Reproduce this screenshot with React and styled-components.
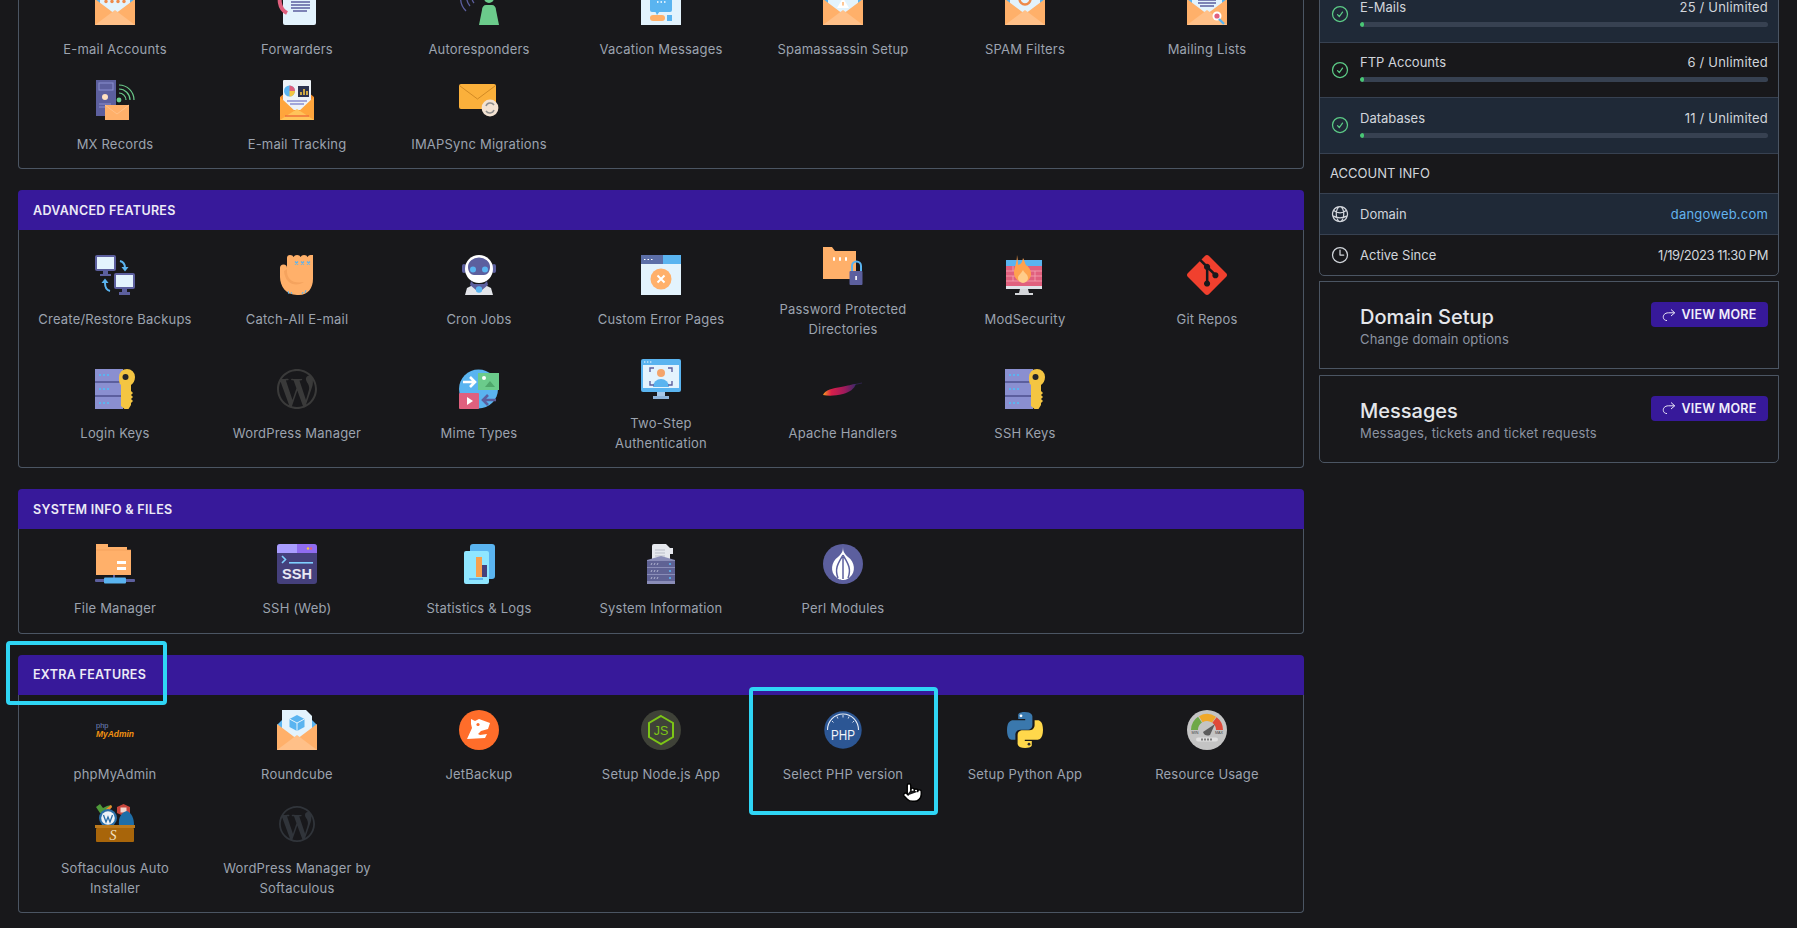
import React from 'react';
import styled, { createGlobalStyle } from 'styled-components';
import { HiOutlineCheckCircle, HiOutlineGlobeAlt, HiOutlineClock } from 'react-icons/hi2';
import { SiGit, SiWordpress } from 'react-icons/si';
import { Pointer } from 'lucide-react';

const ORANGE = '#ffb06a';
const PAPER = '#e3f3fd';
const INDIGO = '#5c5f9e';
const LAVENDER = '#8a8fd0';
const SKY = '#5ab4f0';
const GREEN = '#6bcb8b';
const PINK = '#e0607e';

const Ico = ({ children }) => <IconSvg viewBox="0 0 40 40">{children}</IconSvg>;

const Envelope = ({ children, over }) => (
  <Ico>
    <polygon points="0,15 6,9 34,9 40,15 40,40 0,40" fill={SKY} />
    <path d="M5 0 H29 L35 6 V30 H5Z" fill={PAPER} />
    {children}
    <path d="M0 14 L20 29 L40 14 V40 H0Z" fill={ORANGE} />
    <path d="M0 40 L20 25 L40 40Z" fill="#ffc088" />
    {over}
  </Ico>
);

const ServerKey = () => (
  <Ico>
    {[0, 14, 28].map(y => (
      <g key={y}>
        <rect x="0" y={y} width="28" height="12" fill={LAVENDER} />
        <rect x="0" y={y + 12} width="28" height="2" fill={INDIGO} />
        <path d={`M4 ${y + 6} h2 M8 ${y + 6} h2 M12 ${y + 6} h2`} stroke={SKY} strokeWidth="2" />
      </g>
    ))}
    <path d="M32 0 a8 8 0 0 1 8 8 c0 4 -2 6.500 -4 8 v6 l2 2 -2 2 2 2 -2 2 2 2 -2 2 v2 l-2.500 4 h-4 l-3.500 -3 V16 c-2 -1.500 -2 -4 -2 -8 a8 8 0 0 1 8 -8z" fill="#f4c542" />
    <circle cx="30.500" cy="8" r="3" fill="#26262b" />
  </Ico>
);

const WpMark = ({ tone, size }) => (
  <IconBox>
    <SiWordpress size={size} color={tone} />
  </IconBox>
);

const icons = {
  accounts: () => (
    <Envelope>
      {[11, 17, 23, 29].map(x => <circle key={x} cx={x} cy="16.500" r="1.700" fill="#ee8a4a" />)}
    </Envelope>
  ),
  forwarders: () => (
    <Ico>
      <rect x="6" y="3" width="33" height="37" rx="2" fill={PAPER} />
      <path d="M14 17 h19 M14 20 h19 M14 23 h19 M16 26 h14" stroke={INDIGO} strokeWidth="1.400" />
      <path d="M7 6 C0 12 2 24 10 28" fill="none" stroke={PINK} strokeWidth="4" />
      <path d="M6 3 L12 9 L5 11Z" fill={PINK} />
    </Ico>
  ),
  autoresponders: () => (
    <Ico>
      <circle cx="30" cy="13" r="5" fill={GREEN} />
      <path d="M20 40 l3 -15 a4 5 0 0 1 4 -5 h6 a4 5 0 0 1 4 5 l3 15z" fill={GREEN} />
      <path d="M2 10 A18 18 0 0 0 7 26 M8 10 A13 13 0 0 0 11 21 M13 12 A8 8 0 0 0 15 18" fill="none" stroke={INDIGO} strokeWidth="1.300" />
    </Ico>
  ),
  vacation: () => (
    <Ico>
      <rect width="40" height="40" fill={PAPER} />
      <rect x="9" y="8" width="22" height="19" rx="2" fill={SKY} />
      <path d="M14 26 h5 l-3 4z" fill={SKY} />
      <path d="M16 17 h1.500 M19.500 17 h1.500 M23 17 h1.500" stroke="#fff" strokeWidth="1.500" />
      <rect x="9" y="30" width="15" height="6" rx="3" fill={ORANGE} />
      <rect x="26" y="30" width="5" height="6" fill={SKY} />
    </Ico>
  ),
  spam: () => (
    <Envelope>
      <path d="M20 13 L26 23 H14Z" fill="#fff" />
      <rect x="19.300" y="17" width="1.400" height="3.600" fill={ORANGE} />
    </Envelope>
  ),
  filters: () => (
    <Envelope>
      <circle cx="20" cy="14" r="5.500" fill="none" stroke="#ee8a4a" strokeWidth="2.400" />
    </Envelope>
  ),
  mailing: () => (
    <Envelope
      over={
        <>
          <circle cx="30" cy="31" r="4.500" fill="#fff" />
          <circle cx="30" cy="31" r="2.600" fill={PINK} />
          <path d="M32 34 l5 5" stroke={SKY} strokeWidth="2.400" />
        </>
      }
    >
      <path d="M11 15 h18 M11 18 h18 M13 21 h14" stroke={INDIGO} strokeWidth="1.300" />
    </Envelope>
  ),
  mx: () => (
    <Ico>
      <rect x="1" y="0" width="20" height="36" fill={INDIGO} />
      <rect x="4" y="3" width="14" height="7" fill="none" stroke={LAVENDER} />
      <circle cx="10" cy="17" r="3" fill="#ffe0c0" />
      <path d="M4 24 h12 M4 27 h8" stroke={LAVENDER} />
      <circle cx="24" cy="20" r="2.400" fill={GREEN} />
      <path d="M24 13 a7 7 0 0 1 7 7 M24 9 a11 11 0 0 1 11 11 M24 5 a15 15 0 0 1 15 15" fill="none" stroke={GREEN} strokeWidth="1.200" />
      <rect x="10" y="25" width="24" height="15" fill={ORANGE} />
      <path d="M10 25 l12 9 12 -9" fill="none" stroke="#ffc088" />
    </Ico>
  ),
  tracking: () => (
    <Ico>
      <polygon points="3,17 20,3 37,17 37,40 3,40" fill="#ee8a2a" />
      <rect x="6" y="0" width="28" height="30" rx="1" fill="#eef3f8" />
      <path d="M7 11 a5.500 5.500 0 1 0 11 0 a5.500 5.500 0 1 0 -11 0" fill={SKY} />
      <path d="M12.500 11 V5.500 A5.500 5.500 0 0 1 18 11Z" fill={PINK} />
      <path d="M12.500 11 H18 A5.500 5.500 0 0 1 12.500 16.500Z" fill="#f4c542" />
      <rect x="21" y="6" width="11" height="11" fill="#2c3350" />
      <path d="M24 15 v-3 M27 15 v-6 M30 15 v-4" stroke="#f4c542" strokeWidth="1.600" />
      <path d="M10 21 h20 M13 24 h14" stroke={LAVENDER} strokeWidth="1.400" />
      <path d="M3 17 L20 33 L37 17 V40 H3Z" fill="#ffa53c" />
      <path d="M3 40 L20 29 L37 40Z" fill="#ffc35a" />
      <path d="M8 36 h24" stroke="#ee6a3a" strokeWidth="1.400" />
    </Ico>
  ),
  imapsync: () => (
    <Ico>
      <rect x="0" y="4" width="37" height="25" rx="2" fill="#fbb03b" />
      <path d="M1 6 L18.500 19 L36 6" fill="none" stroke="#d28a24" strokeWidth="1" />
      <circle cx="31" cy="28" r="8.400" fill="#f3e2d2" />
      <path d="M27 26 a4.500 4.500 0 0 1 8 -1 M35 30 a4.500 4.500 0 0 1 -8 1" fill="none" stroke="#8e8e8e" strokeWidth="1.500" />
    </Ico>
  ),
  backups: () => (
    <Ico>
      <rect x="0" y="0" width="21" height="16" rx="2" fill={INDIGO} />
      <rect x="2" y="2" width="17" height="12" fill={PAPER} />
      <path d="M8 16 h5 v3 h3 v2 H5 v-2 h3z" fill={INDIGO} />
      <rect x="19" y="18" width="21" height="16" rx="2" fill={INDIGO} />
      <rect x="21" y="20" width="17" height="12" fill={PAPER} />
      <path d="M27 34 h5 v3 h3 v3 H24 v-3 h3z" fill={INDIGO} />
      <path d="M25 6 c4 1 5 4 5 7" fill="none" stroke={SKY} strokeWidth="2" />
      <path d="M26.500 12 h7 l-3.500 4.500z" fill={SKY} />
      <path d="M15 36 c-4 -1 -5 -5 -5 -8" fill="none" stroke={SKY} strokeWidth="2" />
      <path d="M6.500 28 h7 l-3.500 -4.500z" fill={SKY} />
    </Ico>
  ),
  catchall: () => (
    <Ico>
      <path d="M10 3 q0 -3 3 -3 q3 0 3.500 2 q1 -2 3.500 -2 q3 0 3.500 2 q1 -2 3.500 -2 q3 0 3.500 2 q1 -2 3 -2 h2.500 V24 c0 9 -5 16 -14 16 h-2 C9 40 3 31 3 22 v-9 a3.500 3.500 0 0 1 7 0z" fill={ORANGE} />
      <path d="M10 14 C9 25 17 29 27 27 C20 32 8 30 7 16z" fill="#f5a35e" />
      <path d="M18 6.500 l3 3 m0 -3 l-3 3 M24 6.500 l3 3 m0 -3 l-3 3 M30 6.500 l3 3 m0 -3 l-3 3" stroke={SKY} strokeWidth="1.300" />
      <path d="M11 36 l1 3 M14 37 l1 2 M25 39 l1 -2 M28 38 l1 -3" stroke={SKY} strokeWidth="1" />
    </Ico>
  ),
  cron: () => (
    <Ico>
      <rect x="3" y="9" width="4" height="9" rx="2" fill={INDIGO} />
      <rect x="33" y="9" width="4" height="9" rx="2" fill={INDIGO} />
      <path d="M6 40 l2 -7 8 -4 h8 l8 4 2 7z" fill="#e3e5ea" />
      <ellipse cx="20" cy="14" rx="14" ry="14" fill="#fff" />
      <path d="M9 12 a11 9.500 0 0 1 22 0 c0 5 -3 8 -6 8 h-10 c-3 0 -6 -3 -6 -8z" fill={INDIGO} />
      <circle cx="14" cy="14.500" r="3" fill={SKY} />
      <circle cx="26" cy="14.500" r="3" fill={SKY} />
      <path d="M12 26 l3 3 h10 l3 -3 1 4 -6 5 h-6 l-6 -5z" fill={INDIGO} />
      <circle cx="20" cy="34.500" r="3.200" fill={SKY} />
    </Ico>
  ),
  errorPage: () => (
    <Ico>
      <rect width="40" height="40" fill={PAPER} />
      <rect width="22" height="9" fill="#5c6fa8" />
      <rect x="22" width="18" height="9" fill={SKY} />
      <path d="M3 4.500 h1.500 M6.500 4.500 h1.500 M10 4.500 h1.500" stroke="#fff" />
      <circle cx="20" cy="24" r="10.500" fill={ORANGE} />
      <path d="M16.500 20.500 l7 7 M23.500 20.500 l-7 7" stroke="#fff" strokeWidth="2" />
    </Ico>
  ),
  password: () => (
    <Ico>
      <path d="M0 2 h9 l3 4 h21 v28 H0z" fill={ORANGE} />
      <path d="M10 14 h2 M16 14 h2 M22 14 h2" stroke="#fff" strokeWidth="3.500" />
      <path d="M29 26 v-5 a4.500 4.500 0 0 1 9 0 v5" fill="none" stroke={SKY} strokeWidth="2" />
      <rect x="26.500" y="26" width="13" height="14" rx="1" fill={INDIGO} />
      <rect x="32.300" y="31" width="1.600" height="4" fill="#fff" />
    </Ico>
  ),
  modsec: () => (
    <Ico>
      <rect x="1" y="5" width="36" height="6" fill={SKY} />
      <rect x="1" y="11" width="36" height="20" fill={PINK} />
      <path d="M1 16 h36 M1 21 h36 M1 26 h36 M8 11 v5 M22 11 v5 M30 16 v5 M8 21 v5 M30 21 v5" stroke="#f6a4b4" strokeWidth=".8" />
      <rect x="1" y="31" width="36" height="3" fill="#dfe2e8" />
      <path d="M15 34 h8 l1 4 h4 v2 H10 v-2 h4z" fill="#d4d6da" />
      <path d="M12 0 c1 6 1 8 1 10 c3 -1 4 -2 5 -7 c2 4 2 5 3 7 c3 2 5 5 5 9 c0 5 -4 8 -8 8 c-5 0 -9 -4 -9 -9 c0 -6 3 -9 3 -18z" fill="#ffa24e" />
      <path d="M18 15 c1 3 5 4 5 8 a5 5 0 0 1 -10 0 c0 -3 3 -4 5 -8z" fill="#ffcc8a" />
    </Ico>
  ),
  git: () => (
    <IconBox>
      <SiGit size={40} color="#f0402e" />
    </IconBox>
  ),
  loginKeys: ServerKey,
  wordpress: () => <WpMark tone="#3a3a3a" size={40} />,
  mime: () => (
    <Ico>
      <circle cx="19.500" cy="20" r="19.500" fill={SKY} />
      <rect x="19" y="4" width="21" height="17" fill={GREEN} />
      <circle cx="25" cy="9" r="2" fill="#fff" />
      <path d="M26 18 l5 -6 5 6z" fill="#4ea66a" />
      <rect x="0" y="24" width="20" height="16" rx="1" fill={PINK} />
      <path d="M8 28 l6 4 -6 4z" fill="#fff" />
      <path d="M4 13 h11 M11 8 l5 5 -5 5" fill="none" stroke="#fff" strokeWidth="2.600" />
      <path d="M37 31 h-12 M29 26 l-5 5 5 5" fill="none" stroke={INDIGO} strokeWidth="2.600" />
    </Ico>
  ),
  twostep: () => (
    <Ico>
      <rect width="40" height="33" rx="2" fill={SKY} />
      <rect x="2" y="6" width="36" height="23" fill={PAPER} />
      <path d="M3 3 h1.400 M6 3 h1.400 M9 3 h1.400" stroke="#fff" />
      <circle cx="20" cy="14" r="4" fill="#f4a46a" />
      <path d="M12 28 a8 8 0 0 1 16 0z" fill={SKY} />
      <path d="M9 13 v-4 h4 M27 9 h4 v4 M9 22 v4 h4 M31 22 v4 h-4" fill="none" stroke={INDIGO} strokeWidth="1.400" />
      <rect x="16" y="33" width="8" height="4" fill="#a8c8e8" />
      <rect x="12" y="37" width="16" height="3" fill="#8fb4da" />
    </Ico>
  ),
  apache: () => (
    <Ico>
      <defs>
        <linearGradient id="feather" x1="0" x2="1" y1="0" y2="0">
          <stop offset="0" stopColor="#f79a1f" />
          <stop offset=".25" stopColor="#d81f4a" />
          <stop offset=".65" stopColor="#a01a5c" />
          <stop offset="1" stopColor="#3a2a6a" />
        </linearGradient>
      </defs>
      <path d="M0 26 C2 21 10 19 18 18 C25 17 29 15 33 15 C31 20 27 23 20 25 C12 27 5 27 0 26z" fill="url(#feather)" />
      <path d="M32 15.500 L39 14" stroke="#3a2a6a" strokeWidth=".6" />
    </Ico>
  ),
  sshKeys: ServerKey,
  fileManager: () => (
    <Ico>
      <path d="M1 0 h12 v3 h19 v3 h4 v25 H1z" fill={ORANGE} />
      <path d="M1 6 h35" stroke="#ee9a54" strokeWidth=".6" />
      <rect x="22" y="17" width="9" height="3" fill="#fff" />
      <rect x="22" y="23" width="9" height="3" fill="#fff" />
      <rect x="18" y="31" width="2" height="4" fill={INDIGO} />
      <rect x="0" y="35" width="40" height="3" rx="1" fill={INDIGO} />
      <rect x="9" y="33.500" width="22" height="6" rx="1" fill={SKY} />
    </Ico>
  ),
  sshWeb: () => (
    <Ico>
      <rect width="40" height="40" rx="3" fill="#45407c" />
      <path d="M0 3 a3 3 0 0 1 3 -3 h17 v9 H0z" fill="#a99dff" />
      <path d="M20 0 h17 a3 3 0 0 1 3 3 v6 H20z" fill="#8f6cf0" />
      <circle cx="31" cy="4.500" r="1.200" fill="#f4c542" />
      <circle cx="34" cy="4.500" r="1.200" fill={PINK} />
      <path d="M5 12 l3.500 3.500 L5 19" fill="none" stroke="#7fd0ff" strokeWidth="1.600" />
      <rect x="12" y="18" width="24" height="1.600" fill="#7fd0ff" />
      <SvgLabel x="20" y="35" fontSize="15" fontWeight="700" fill="#e8e8f4" textAnchor="middle" textLength="30" lengthAdjust="spacingAndGlyphs">SSH</SvgLabel>
    </Ico>
  ),
  stats: () => (
    <Ico>
      <rect x="11" y="0" width="25" height="35" rx="3" fill={SKY} />
      <rect x="5" y="7" width="25" height="33" rx="2" fill="#8fe6ff" />
      <rect x="17" y="13" width="6" height="20" fill="#f7a04e" />
      <rect x="23" y="21" width="5" height="12" fill="#45407c" />
      <rect x="10" y="34" width="14" height="2" fill={SKY} />
    </Ico>
  ),
  sysinfo: () => (
    <Ico>
      <path d="M11 2 a2 2 0 0 1 2 -2 h12 l4 4 h3 v6 h-3 v8 H11z" fill="#e6e8ee" />
      <path d="M14 6 h10 M14 9 h10 M14 12 h10" stroke="#b9bdc8" />
      <path d="M6 16 l14 -4 14 4 v24 H6z" fill="#8a8db8" />
      {[17, 24, 31].map(y => (
        <g key={y}>
          <path d={`M6 ${y} h28 v6 H6z`} fill="#5f6294" />
          <path d={`M10 ${y + 4} l1 -2 M13 ${y + 4} l1 -2 M16 ${y + 4} l1 -2`} stroke="#c4c6de" strokeWidth=".8" />
          <circle cx="29" cy={y + 3} r="1.100" fill={SKY} />
        </g>
      ))}
    </Ico>
  ),
  perl: () => (
    <Ico>
      <circle cx="20" cy="20" r="20" fill={INDIGO} />
      <path d="M20 2 C20 8 21 9 25 13 C32 18 33 28 27 33 C24 36 21 36 20 36 C19 36 16 36 13 33 C7 28 8 18 15 13 C19 9 20 8 20 2Z" fill="#fff" />
      <path d="M20 11 C16 18 11 24 15 34 M20 11 C24 18 29 24 25 34 M20 13 V35" fill="none" stroke={INDIGO} strokeWidth="1.500" />
    </Ico>
  ),
  phpmyadmin: () => (
    <Ico>
      <SvgLabel x="1" y="17.500" fontSize="7.500" fill="#6f82bd">php</SvgLabel>
      <SvgLabel x="1" y="26.500" fontSize="8.800" fontWeight="700" fontStyle="italic" fill="#f29111" textLength="38" lengthAdjust="spacingAndGlyphs">MyAdmin</SvgLabel>
    </Ico>
  ),
  roundcube: () => (
    <Envelope>
      <path d="M20 5 l7.500 4 v8 l-7.500 4 -7.500 -4 v-8z" fill={SKY} />
      <path d="M12.500 9 l7.500 4 7.500 -4 M20 13 v8" fill="none" stroke={PAPER} strokeWidth="1" />
    </Envelope>
  ),
  jetbackup: () => (
    <Ico>
      <circle cx="20" cy="20" r="20" fill="#ff6d2a" />
      <path d="M12 9 L16 11 L20 9 L31 13 L29 19 L22 21 L19 24 L21 25 L28 24 L26 28 L8 29 L13 18 L12 14Z" fill="#fff" />
      <circle cx="19" cy="14.500" r="1.600" fill="#ff6d2a" />
    </Ico>
  ),
  node: () => (
    <Ico>
      <circle cx="20" cy="20" r="20" fill="#3f4238" />
      <polygon points="20,6 32,13 32,27 20,34 8,27 8,13" fill="none" stroke="#7cc516" strokeWidth="2" />
      <SvgLabel x="20" y="25" fontSize="12.500" textAnchor="middle" fill="#7cc516">JS</SvgLabel>
    </Ico>
  ),
  php: () => (
    <Ico>
      <circle cx="20" cy="20" r="18.700" fill="#2c5694" />
      <path d="M4.500 20 A15.500 16 0 0 1 35.500 20" fill="none" stroke="#e6ecf6" strokeWidth="1.100" />
      <path d="M9 11 l1.500 1.500 M14 6.500 l.8 2 M20 5 v2.500 M26 6.500 l-.8 2 M31 11 l-1.500 1.500" stroke="#e6ecf6" strokeWidth=".9" />
      <SvgLabel x="20" y="30" fontSize="15.500" textAnchor="middle" fill="#f0f4fa" textLength="24" lengthAdjust="spacingAndGlyphs">PHP</SvgLabel>
    </Ico>
  ),
  python: () => (
    <Ico>
      <path d="M19.800 2 c-7 0 -6.600 3 -6.600 3 v4 h7 v1.200 H8 S2 9.600 2 20 s5.200 9.800 5.200 9.800 h3.200 v-4.800 s-.2 -5.200 5.200 -5.200 h6.800 s5 .1 5 -4.800 V7 S28.200 2 19.800 2z" fill="#3a78ad" />
      <circle cx="16" cy="5.800" r="1.400" fill="#fff" />
      <path d="M20.200 38 c7 0 6.600 -3 6.600 -3 v-4 h-7 v-1.200 H32 s6 .6 6 -9.800 s-5.200 -9.800 -5.200 -9.800 h-3.200 v4.800 s.2 5.200 -5.200 5.200 h-6.800 s-5 -.1 -5 4.800 V33 s-.8 5 7.600 5z" fill="#ffd84b" />
      <circle cx="24" cy="34.200" r="1.400" fill="#2a2a30" />
    </Ico>
  ),
  resource: () => (
    <Ico>
      <circle cx="20" cy="20" r="20" fill="#c4c4c4" />
      <path d="M7.500 20 A12.500 12.500 0 0 1 13 9.600" fill="none" stroke="#6ea848" strokeWidth="7" />
      <path d="M13.800 9.200 A12.500 12.500 0 0 1 27 9.600" fill="none" stroke="#f0a82a" strokeWidth="7" />
      <path d="M27.500 10 A12.500 12.500 0 0 1 32.500 20" fill="none" stroke="#e04a3a" strokeWidth="7" />
      <path d="M16 22 L28 14 L23 25 Q18 27 16 22Z" fill="#5a5a5a" />
      <SvgLabel x="8" y="23.500" fontSize="3.800" fill="#444" textAnchor="middle">MIN</SvgLabel>
      <SvgLabel x="32" y="23.500" fontSize="3.800" fill="#444" textAnchor="middle">MAX</SvgLabel>
      <rect x="9" y="27.500" width="22" height="4" rx="2" fill="#e0e0e0" />
      <path d="M15 28.500 v2 M18 28.500 v2 M21 28.500 v2 M24 28.500 v2" stroke="#555" strokeWidth="1.400" />
    </Ico>
  ),
  softaculous: () => (
    <Ico>
      <path d="M1 3 l4 -3 3 4 4 -2 4 -1 1 2 -5 3 -3 5 -4 -2z" fill="#4f9a3a" />
      <path d="M11 5 l5 -4 1 2 -4 5z" fill="#ee8a2a" />
      <path d="M22 3 l6.500 -3 6.500 3 v6 l-6.500 3 -6.500 -3z" fill="#c8453c" />
      <path d="M25.500 3.500 h6 v5 h-6z" fill="#f0d8d0" />
      <circle cx="13" cy="14" r="9" fill="#2a6ea8" />
      <circle cx="13" cy="14" r="6.800" fill="#eef3f8" />
      <path d="M8.500 11 l2.500 7 2 -5 2 5 2.500 -7" fill="none" stroke="#2a6ea8" strokeWidth="1.300" />
      <path d="M24 21 c-1 -8 3 -13 8 -14 c5 2 7 8 7 14z" fill="#1e6ea8" />
      <rect x="1" y="24" width="38" height="14" rx="1" fill="#a8650a" />
      <rect x="0" y="21" width="40" height="3" fill="#bd7a1c" />
      <text x="18" y="35.500" fontSize="14" fontStyle="italic" fill="#f2e2c4" textAnchor="middle" fontFamily="Liberation Serif, serif">S</text>
    </Ico>
  ),
  wpSoft: () => <WpMark tone="#30343a" size={36} />,
};

const sections = [
  {
    items: [
      ['accounts', 'E-mail Accounts'], ['forwarders', 'Forwarders'], ['autoresponders', 'Autoresponders'],
      ['vacation', 'Vacation Messages'], ['spam', 'Spamassassin Setup'], ['filters', 'SPAM Filters'],
      ['mailing', 'Mailing Lists'], ['mx', 'MX Records'], ['tracking', 'E-mail Tracking'], ['imapsync', 'IMAPSync Migrations'],
    ],
  },
  {
    title: 'Advanced Features',
    items: [
      ['backups', 'Create/Restore Backups'], ['catchall', 'Catch-All E-mail'], ['cron', 'Cron Jobs'],
      ['errorPage', 'Custom Error Pages'], ['password', 'Password Protected\nDirectories'], ['modsec', 'ModSecurity'],
      ['git', 'Git Repos'], ['loginKeys', 'Login Keys'], ['wordpress', 'WordPress Manager'], ['mime', 'Mime Types'],
      ['twostep', 'Two-Step\nAuthentication'], ['apache', 'Apache Handlers'], ['sshKeys', 'SSH Keys'],
    ],
  },
  {
    title: 'System Info & Files',
    items: [
      ['fileManager', 'File Manager'], ['sshWeb', 'SSH (Web)'], ['stats', 'Statistics & Logs'],
      ['sysinfo', 'System Information'], ['perl', 'Perl Modules'],
    ],
  },
  {
    title: 'Extra Features',
    marked: true,
    items: [
      ['phpmyadmin', 'phpMyAdmin'], ['roundcube', 'Roundcube'], ['jetbackup', 'JetBackup'], ['node', 'Setup Node.js App'],
      ['php', 'Select PHP version', true], ['python', 'Setup Python App'], ['resource', 'Resource Usage'],
      ['softaculous', 'Softaculous Auto\nInstaller'], ['wpSoft', 'WordPress Manager by\nSoftaculous'],
    ],
  },
];

const usage = [
  { name: 'E-Mails', value: '25 / Unlimited', alt: true },
  { name: 'FTP Accounts', value: '6 / Unlimited' },
  { name: 'Databases', value: '11 / Unlimited', alt: true },
];

const ForwardIcon = () => (
  <ButtonSvg viewBox="0 0 14 14">
    <path d="M9 1.500 L12.700 4.800 L9 8 M12.700 4.800 H6.500 C2.500 4.800 1 7.500 1.300 9.500 C1.600 11.500 3 12.500 5 12.600" />
  </ButtonSvg>
);

const App = () => (
  <Viewport>
    <GlobalStyle />
    <Scroller>
      <Main>
        {sections.map((section, i) => (
          <Section key={i}>
            {section.title && <SectionHeader>{section.title}</SectionHeader>}
            {section.marked && <HeaderMark />}
            <SectionBody>
              {section.items.map(([icon, label, active]) => {
                const Icon = icons[icon];
                return (
                  <Item key={label}>
                    <Icon />
                    <ItemLabel>{label}</ItemLabel>
                    {active && (
                      <>
                        <ItemMark />
                        <Cursor>
                          <Pointer size={21} fill="#fff" stroke="#000" strokeWidth={1.6} />
                        </Cursor>
                      </>
                    )}
                  </Item>
                );
              })}
            </SectionBody>
          </Section>
        ))}
      </Main>
      <Side>
        <StatsCard>
          {usage.map(row => (
            <UsageRow key={row.name} $alt={row.alt}>
              <CheckIcon />
              <UsageMain>
                <UsageLine>
                  <span>{row.name}</span>
                  <UsageValue>{row.value}</UsageValue>
                </UsageLine>
                <Track>
                  <Fill style={{ width: '1%' }} />
                </Track>
              </UsageMain>
            </UsageRow>
          ))}
          <InfoTitle>Account Info</InfoTitle>
          <InfoRow $alt>
            <InfoGlobe />
            <InfoName>Domain</InfoName>
            <DomainLink>dangoweb.com</DomainLink>
          </InfoRow>
          <InfoRow>
            <InfoClock />
            <InfoName>Active Since</InfoName>
            <InfoValue>1/19/2023 11:30 PM</InfoValue>
          </InfoRow>
        </StatsCard>
        <LinkCard>
          <LinkText>
            <LinkTitle>Domain Setup</LinkTitle>
            <LinkNote>Change domain options</LinkNote>
          </LinkText>
          <ViewMore><ForwardIcon />View More</ViewMore>
        </LinkCard>
        <LinkCard $round>
          <LinkText>
            <LinkTitle>Messages</LinkTitle>
            <LinkNote>Messages, tickets and ticket requests</LinkNote>
          </LinkText>
          <ViewMore><ForwardIcon />View More</ViewMore>
        </LinkCard>
      </Side>
    </Scroller>
  </Viewport>
);

export default App;

const GlobalStyle = createGlobalStyle`
  html, body {
    margin: 0;
    background: #18181b;
    font-family: Inter, "Noto Sans", sans-serif;
  }
`;

const Viewport = styled.div`
  height: 100vh;
  overflow: hidden;
`;

/* the page is photographed scrolled down, so the top of it sits above the window */
const Scroller = styled.div`
  display: grid;
  grid-template-columns: 1fr 460px;
  gap: 15px;
  margin-top: -30px;
  padding: 0 18px;
  align-items: start;
`;

const Main = styled.div`
  display: flex;
  flex-direction: column;
  gap: 21px;
`;

const Section = styled.section`
  position: relative;
`;

const SectionHeader = styled.div`
  height: 40px;
  display: flex;
  align-items: center;
  padding: 0 15px;
  background: #37199a;
  border-radius: 4px 4px 0 0;
  color: #eceaf6;
  font-size: 12.5px;
  font-weight: 600;
  letter-spacing: 0.3px;
  text-transform: uppercase;
`;

const HeaderMark = styled.div`
  position: absolute;
  left: -12px;
  top: -14px;
  width: 161px;
  height: 64px;
  box-sizing: border-box;
  border: 4px solid #2fd5f5;
  border-radius: 4px;
  z-index: 2;
`;

const SectionBody = styled.div`
  display: grid;
  grid-template-columns: repeat(7, 1fr);
  padding: 5px 5px 4px;
  border: 1px solid #4b5563;
  border-top: none;
  border-radius: 0 0 4px 4px;
`;

const Item = styled.div`
  position: relative;
  display: flex;
  flex-direction: column;
  align-items: center;
  justify-content: center;
  padding: 10px 0;
`;

const IconSvg = styled.svg`
  width: 40px;
  height: 40px;
  flex: none;
  display: block;
`;

const IconBox = styled.div`
  width: 40px;
  height: 40px;
  flex: none;
  display: flex;
  align-items: center;
  justify-content: center;
`;

const SvgLabel = styled.text`
  font-family: "Liberation Sans", sans-serif;
`;

const ItemLabel = styled.div`
  margin-top: 15px;
  color: #9ca3af;
  font-size: 13px;
  line-height: 19.5px;
  letter-spacing: 0.2px;
  text-align: center;
  white-space: pre-line;
`;

const ItemMark = styled.div`
  position: absolute;
  left: -3px;
  right: -4px;
  top: -13px;
  bottom: -21px;
  border: 4px solid #2fd5f5;
  border-radius: 4px;
`;

const Cursor = styled.div`
  position: absolute;
  left: 150px;
  top: 82px;
  width: 21px;
  height: 21px;
`;

const Side = styled.div`
  display: flex;
  flex-direction: column;
  gap: 5.5px;
  margin-top: 16px;
`;

const StatsCard = styled.div`
  border: 1px solid #4b5563;
  border-radius: 0 0 5px 5px;
  overflow: hidden;
  color: #d1d5db;
  font-size: 13px;
`;

const UsageRow = styled.div`
  box-sizing: border-box;
  height: 55.5px;
  display: flex;
  align-items: center;
  gap: 10px;
  padding: 0 10px;
  background: ${p => (p.$alt ? '#1f2937' : 'transparent')};
  border-bottom: 1px solid #374151;
`;

const CheckIcon = styled(HiOutlineCheckCircle)`
  width: 20px;
  height: 20px;
  flex: none;
  color: #5ccb86;
`;

const InfoGlobe = styled(HiOutlineGlobeAlt)`
  width: 20px;
  height: 20px;
  flex: none;
`;

const InfoClock = styled(HiOutlineClock)`
  width: 20px;
  height: 20px;
  flex: none;
`;

const UsageMain = styled.div`
  flex: 1;
  margin-top: -4.5px;
`;

const UsageLine = styled.div`
  display: flex;
  justify-content: space-between;
  line-height: 18px;
  margin-bottom: 6px;
`;

const UsageValue = styled.span`
  letter-spacing: 0.2px;
`;

const Track = styled.div`
  height: 5px;
  background: #374151;
  border-radius: 3px;
  overflow: hidden;
`;

const Fill = styled.div`
  height: 100%;
  background: #48c774;
  border-radius: 3px;
`;

const InfoTitle = styled.div`
  box-sizing: border-box;
  height: 40px;
  display: flex;
  align-items: center;
  padding: 0 10px;
  text-transform: uppercase;
  border-bottom: 1px solid #374151;
`;

const InfoRow = styled.div`
  box-sizing: border-box;
  height: ${p => (p.$alt ? '41px' : '40px')};
  display: flex;
  align-items: center;
  padding: 0 10px;
  gap: 10px;
  background: ${p => (p.$alt ? '#1f2937' : 'transparent')};
  border-bottom: ${p => (p.$alt ? '1px solid #374151' : 'none')};
`;

const InfoName = styled.span`
  flex: 1;
`;

const InfoValue = styled.span`
  color: #d1d5db;
  letter-spacing: -0.45px;
`;

const DomainLink = styled.span`
  color: #63b3ed;
  letter-spacing: 0.2px;
`;

const LinkCard = styled.div`
  box-sizing: border-box;
  height: 88px;
  display: flex;
  justify-content: space-between;
  align-items: flex-start;
  padding: 20px 10px 0 40px;
  border: 1px solid #4b5563;
  border-radius: ${p => (p.$round ? '0 0 5px 5px' : '0')};
`;

const LinkText = styled.div`
  padding-top: 1px;
`;

const LinkTitle = styled.div`
  color: #e5e7eb;
  font-size: 20px;
  line-height: 28px;
  font-weight: 500;
`;

const LinkNote = styled.div`
  color: #8b93a1;
  font-size: 13px;
  line-height: 17px;
  letter-spacing: 0.15px;
`;

const ViewMore = styled.button`
  box-sizing: border-box;
  width: 117px;
  height: 25px;
  display: flex;
  align-items: center;
  justify-content: center;
  gap: 5px;
  padding: 0;
  border: none;
  border-radius: 4px;
  background: #37199a;
  color: #f0eefa;
  font-family: inherit;
  font-size: 12.5px;
  font-weight: 600;
  letter-spacing: 0.25px;
  text-transform: uppercase;
`;

const ButtonSvg = styled.svg`
  width: 14px;
  height: 14px;
  fill: none;
  stroke: #e8e4f6;
  stroke-width: 1;
`;
